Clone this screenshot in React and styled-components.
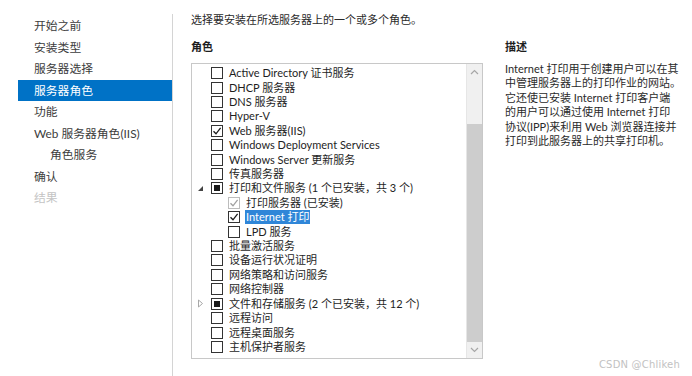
import React from 'react';
import styled, { createGlobalStyle } from 'styled-components';

const GlobalStyle = createGlobalStyle`
  html, body {
    margin: 0;
    padding: 0;
    background: #ffffff;
  }
  body {
    font-family: Lato, "Noto Sans CJK SC", sans-serif;
    color: #1e1e1e;
  }
`;

const navItems = [
  { label: '开始之前' },
  { label: '安装类型' },
  { label: '服务器选择' },
  { label: '服务器角色', active: true },
  { label: '功能' },
  { label: 'Web 服务器角色(IIS)' },
  { label: '角色服务', sub: true },
  { label: '确认' },
  { label: '结果', disabled: true },
];

const roles = [
  { label: 'Active Directory 证书服务' },
  { label: 'DHCP 服务器' },
  { label: 'DNS 服务器' },
  { label: 'Hyper-V' },
  { label: 'Web 服务器(IIS)', state: 'checked' },
  { label: 'Windows Deployment Services' },
  { label: 'Windows Server 更新服务' },
  { label: '传真服务器' },
  { label: '打印和文件服务 (1 个已安装，共 3 个)', state: 'mixed', expander: 'open' },
  { label: '打印服务器 (已安装)', state: 'installed', level: 1 },
  { label: 'Internet 打印', state: 'checked', level: 1, selected: true },
  { label: 'LPD 服务', level: 1 },
  { label: '批量激活服务' },
  { label: '设备运行状况证明' },
  { label: '网络策略和访问服务' },
  { label: '网络控制器' },
  { label: '文件和存储服务 (2 个已安装，共 12 个)', state: 'mixed', expander: 'closed' },
  { label: '远程访问' },
  { label: '远程桌面服务' },
  { label: '主机保护者服务' },
];

const descLines = [
  'Internet 打印用于创建用户可以在其',
  '中管理服务器上的打印作业的网站。',
  '它还使已安装 Internet 打印客户端',
  '的用户可以通过使用 Internet 打印',
  '协议(IPP)来利用 Web 浏览器连接并',
  '打印到此服务器上的共享打印机。',
];

const Page = styled.div`
  position: relative;
  display: flex;
  width: 692px;
  height: 376px;
  overflow: hidden;
  background: #ffffff;
`;

const Nav = styled.nav`
  width: 154px;
  margin-left: 18px;
  margin-top: 14px;
  padding-top: 1px;
  border-right: 1px solid #d4d4d4;
  display: flex;
  flex-direction: column;
`;

const NavItem = styled.div`
  height: 21.5px;
  line-height: 21.5px;
  padding-left: ${({ $sub }) => ($sub ? '32px' : '16px')};
  font-size: 11.8px;
  white-space: nowrap;
  background: ${({ $active }) => ($active ? '#0072c6' : 'transparent')};
  color: ${({ $active, $disabled }) =>
    $active ? '#ffffff' : $disabled ? '#c4c4c4' : '#3c3c3c'};
`;

const Main = styled.main`
  display: flex;
  flex-direction: column;
  padding: 12px 0 0 18px;
`;

const Intro = styled.div`
  font-size: 11px;
  line-height: 15px;
  color: #2a2a2a;
`;

const Columns = styled.div`
  display: flex;
  gap: 22px;
  margin-top: 12px;
`;

const Column = styled.section`
  display: flex;
  flex-direction: column;
  width: ${({ $w }) => $w}px;
`;

const Heading = styled.div`
  font-size: 11px;
  font-weight: 700;
  line-height: 16px;
  height: 16px;
  color: #1e1e1e;
  margin-bottom: 8px;
`;

const ListBox = styled.div`
  display: flex;
  height: 294px;
  border: 1px solid #c8c8c8;
  background: #fff;
`;

const Rows = styled.div`
  flex: 1;
  padding-top: 2px;
  display: flex;
  flex-direction: column;
`;

const Row = styled.div`
  display: flex;
  align-items: center;
  height: 14.42px;
  padding-left: ${({ $level }) => 4 + $level * 17}px;
  font-size: 11px;
  white-space: nowrap;
`;

const ExpanderSlot = styled.span`
  width: 15px;
  height: 12px;
  display: flex;
  align-items: center;
  justify-content: flex-start;
  padding-left: 1px;
  box-sizing: border-box;
`;

const Box = styled.span`
  width: 12px;
  height: 12px;
  box-sizing: border-box;
  border: 1px solid ${({ $muted }) => ($muted ? '#bcbcbc' : '#333333')};
  background: #fff;
  display: flex;
  align-items: center;
  justify-content: center;
  margin-right: 6px;
  flex-shrink: 0;
`;

const MixedFill = styled.span`
  width: 6px;
  height: 6px;
  background: #1a1a1a;
`;

const Label = styled.span`
  padding: 0 1px;
  margin-left: -1px;
  line-height: 14px;
  background: ${({ $selected }) => ($selected ? '#2f86d8' : 'transparent')};
  color: ${({ $selected }) => ($selected ? '#ffffff' : '#1e1e1e')};
`;

const ScrollBar = styled.div`
  width: 15px;
  display: flex;
  flex-direction: column;
  background: #f0f0f0;
  border-left: 1px solid #e6e6e6;
`;

const ArrowBtn = styled.div`
  height: 16px;
  display: flex;
  align-items: center;
  justify-content: center;
`;

const Track = styled.div`
  flex: 1;
  display: flex;
  flex-direction: column;
  padding-top: ${({ $before }) => $before}px;
`;

const Thumb = styled.div`
  height: ${({ $h }) => $h}px;
  background: #cdcdcd;
`;

const DescHeading = styled(Heading)`
  margin-bottom: 7px;
`;

const DescLine = styled.div`
  font-size: 11px;
  line-height: 14.4px;
  white-space: nowrap;
  color: #2a2a2a;
`;

const Watermark = styled.div`
  position: absolute;
  right: 12px;
  bottom: 6px;
  font-family: "DejaVu Sans", sans-serif;
  font-size: 10px;
  color: #c2c2c2;
  letter-spacing: 0.2px;
`;

const Check = ({ color }) => (
  <svg width="10" height="10" viewBox="0 0 10 10">
    <path d="M1.5 5.2 L4 7.8 L8.6 1.8" fill="none" stroke={color} strokeWidth="1.3" />
  </svg>
);

const Expander = ({ kind }) =>
  kind === 'open' ? (
    <svg width="7" height="7" viewBox="0 0 7 7">
      <path d="M6 1 L6 6 L1 6 Z" fill="#444" />
    </svg>
  ) : kind === 'closed' ? (
    <svg width="7" height="9" viewBox="0 0 7 9">
      <path d="M1.5 1 L5.5 4.5 L1.5 8 Z" fill="none" stroke="#a8a8a8" strokeWidth="1" />
    </svg>
  ) : null;

const Chevron = ({ up }) => (
  <svg width="9" height="6" viewBox="0 0 9 6">
    <path
      d={up ? 'M1 5 L4.5 1.5 L8 5' : 'M1 1 L4.5 4.5 L8 1'}
      fill="none"
      stroke="#a6a6a6"
      strokeWidth="1.2"
    />
  </svg>
);

const CheckBox = ({ state }) => {
  const muted = state === 'installed';
  return (
    <Box $muted={muted}>
      {state === 'checked' && <Check color="#1a1a1a" />}
      {state === 'installed' && <Check color="#a0a0a0" />}
      {state === 'mixed' && <MixedFill />}
    </Box>
  );
};

export default function App() {
  return (
    <Page>
      <GlobalStyle />
      <Nav>
        {navItems.map((item) => (
          <NavItem
            key={item.label}
            $active={item.active}
            $sub={item.sub}
            $disabled={item.disabled}
          >
            {item.label}
          </NavItem>
        ))}
      </Nav>
      <Main>
        <Intro>选择要安装在所选服务器上的一个或多个角色。</Intro>
        <Columns>
          <Column $w={292}>
            <Heading>角色</Heading>
            <ListBox>
              <Rows>
                {roles.map((r) => (
                  <Row key={r.label} $level={r.level || 0}>
                    <ExpanderSlot>
                      <Expander kind={r.expander} />
                    </ExpanderSlot>
                    <CheckBox state={r.state} />
                    <Label $selected={r.selected}>{r.label}</Label>
                  </Row>
                ))}
              </Rows>
              <ScrollBar>
                <ArrowBtn>
                  <Chevron up />
                </ArrowBtn>
                <Track $before={44}>
                  <Thumb $h={218} />
                </Track>
                <ArrowBtn>
                  <Chevron />
                </ArrowBtn>
              </ScrollBar>
            </ListBox>
          </Column>
          <Column $w={180}>
            <DescHeading>描述</DescHeading>
            {descLines.map((line) => (
              <DescLine key={line}>{line}</DescLine>
            ))}
          </Column>
        </Columns>
      </Main>
      <Watermark>CSDN @Chlikeh</Watermark>
    </Page>
  );
}
